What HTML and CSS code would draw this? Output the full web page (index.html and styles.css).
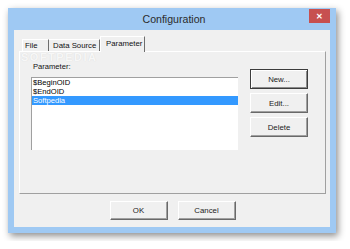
FILE: index.html
```html
<!DOCTYPE html>
<html lang="en">
<head>
    <meta charset="UTF-8">
    <title>Configuration</title>
    <link rel="stylesheet" href="styles.css">
</head>
<body>
    <div class="window">
        <div class="titlebar">
            <span class="title">Configuration</span>
            <div class="close">&#x2715;</div>
        </div>
        <div class="client">
            <div class="tabs">
                <div class="tab tab-file">File</div>
                <div class="tab tab-source">Data Source</div>
                <div class="tab tab-param active">Parameter</div>
            </div>
            <div class="panel">
                <div class="watermark">SOFTPEDIA</div>
                <div class="left">
                    <div class="label">Parameter:</div>
                    <div class="listbox">
                        <div class="item">$BeginOID</div>
                        <div class="item">$EndOID</div>
                        <div class="item selected">Softpedia</div>
                    </div>
                </div>
                <div class="right">
                    <button class="btn default">New...</button>
                    <button class="btn">Edit...</button>
                    <button class="btn">Delete</button>
                </div>
            </div>
            <div class="footer">
                <button class="btn">OK</button>
                <button class="btn">Cancel</button>
            </div>
        </div>
    </div>
</body>
</html>
```

FILE: styles.css
```css
body {
    margin: 0;
    background: #fff;
    font-family: "Liberation Sans", Arial, sans-serif;
}
.window {
    margin: 8px;
    width: 328px;
    height: 225px;
    background: #9fc9f3;
    box-shadow: 2px 3px 7px rgba(0, 0, 0, 0.45);
    display: flex;
    flex-direction: column;
}
.titlebar {
    position: relative;
    height: 22px;
    display: flex;
    align-items: center;
    justify-content: center;
}
.title {
    font-size: 10.6px;
    color: #2b2b2b;
    margin-left: 4px;
}
.close {
    position: absolute;
    top: 1px;
    right: 6px;
    width: 21px;
    height: 14px;
    background: #c75050;
    color: #fff;
    font-size: 8px;
    font-weight: bold;
    display: flex;
    align-items: center;
    justify-content: center;
}
.client {
    flex: 1;
    margin: 0 6px 6px;
    background: #f0f0f0;
    display: flex;
    flex-direction: column;
    padding: 6px 4px 0 5px;
}
.tabs {
    display: flex;
    align-items: flex-end;
    padding-left: 3px;
    height: 15px;
    position: relative;
    z-index: 1;
}
.tab {
    height: 12px;
    font-size: 7.8px;
    line-height: 12px;
    color: #111;
    border-top: 1px solid #fff;
    border-left: 1px solid #fff;
    border-right: 1px solid #6e6e6e;
    box-sizing: border-box;
    white-space: nowrap;
}
.tab-file {
    width: 27px;
    padding-left: 2px;
}
.tab-source {
    width: 51px;
    padding-left: 4px;
    border-left: none;
}
.tab.active {
    width: 45px;
    height: 16px;
    margin-bottom: -1px;
    padding-left: 5px;
    background: #f0f0f0;
    line-height: 13px;
}
.panel {
    position: relative;
    height: 143px;
    box-sizing: border-box;
    border-top: 1px solid #fff;
    border-left: 1px solid #fff;
    border-right: 1px solid #a0a0a0;
    border-bottom: 1px solid #a0a0a0;
    display: flex;
    padding: 10px 0 0 11px;
}
.watermark {
    position: absolute;
    left: 1px;
    top: 0;
    font-size: 11px;
    line-height: 10px;
    font-weight: bold;
    letter-spacing: 1.5px;
    color: #f7f7f7;
    text-shadow: 0 0 1px #d6d6d6;
}
.left {
    display: flex;
    flex-direction: column;
    position: relative;
}
.label {
    font-size: 7.6px;
    line-height: 10px;
    color: #111;
    padding-left: 2px;
    margin-bottom: 5px;
}
.listbox {
    width: 207px;
    height: 73px;
    box-sizing: border-box;
    background: #fff;
    border-top: 1px solid #a0a0a0;
    border-left: 1px solid #a0a0a0;
}
.item {
    font-size: 7.6px;
    line-height: 9px;
    height: 9px;
    padding-left: 1px;
    color: #000;
}
.item.selected {
    background: #3399ff;
    color: #fff;
}
.right {
    display: flex;
    flex-direction: column;
    gap: 4px;
    margin-left: 12px;
    padding-top: 7px;
}
.btn {
    width: 58px;
    height: 20px;
    box-sizing: border-box;
    background: #f0f0f0;
    font-family: "Liberation Sans", Arial, sans-serif;
    font-size: 7.8px;
    color: #222;
    padding: 0;
    border-top: 1px solid #fff;
    border-left: 1px solid #fff;
    border-right: 1px solid #696969;
    border-bottom: 1px solid #696969;
    box-shadow: inset -1px -1px 0 #a0a0a0;
}
.btn.default {
    border: 1px solid #3c3c3c;
    box-shadow: inset 1px 1px 0 #fff, inset -1px -1px 0 #8a8a8a;
}
.footer {
    display: flex;
    justify-content: center;
    gap: 10px;
    padding-top: 7px;
}
.footer .btn {
    height: 19px;
}
```
